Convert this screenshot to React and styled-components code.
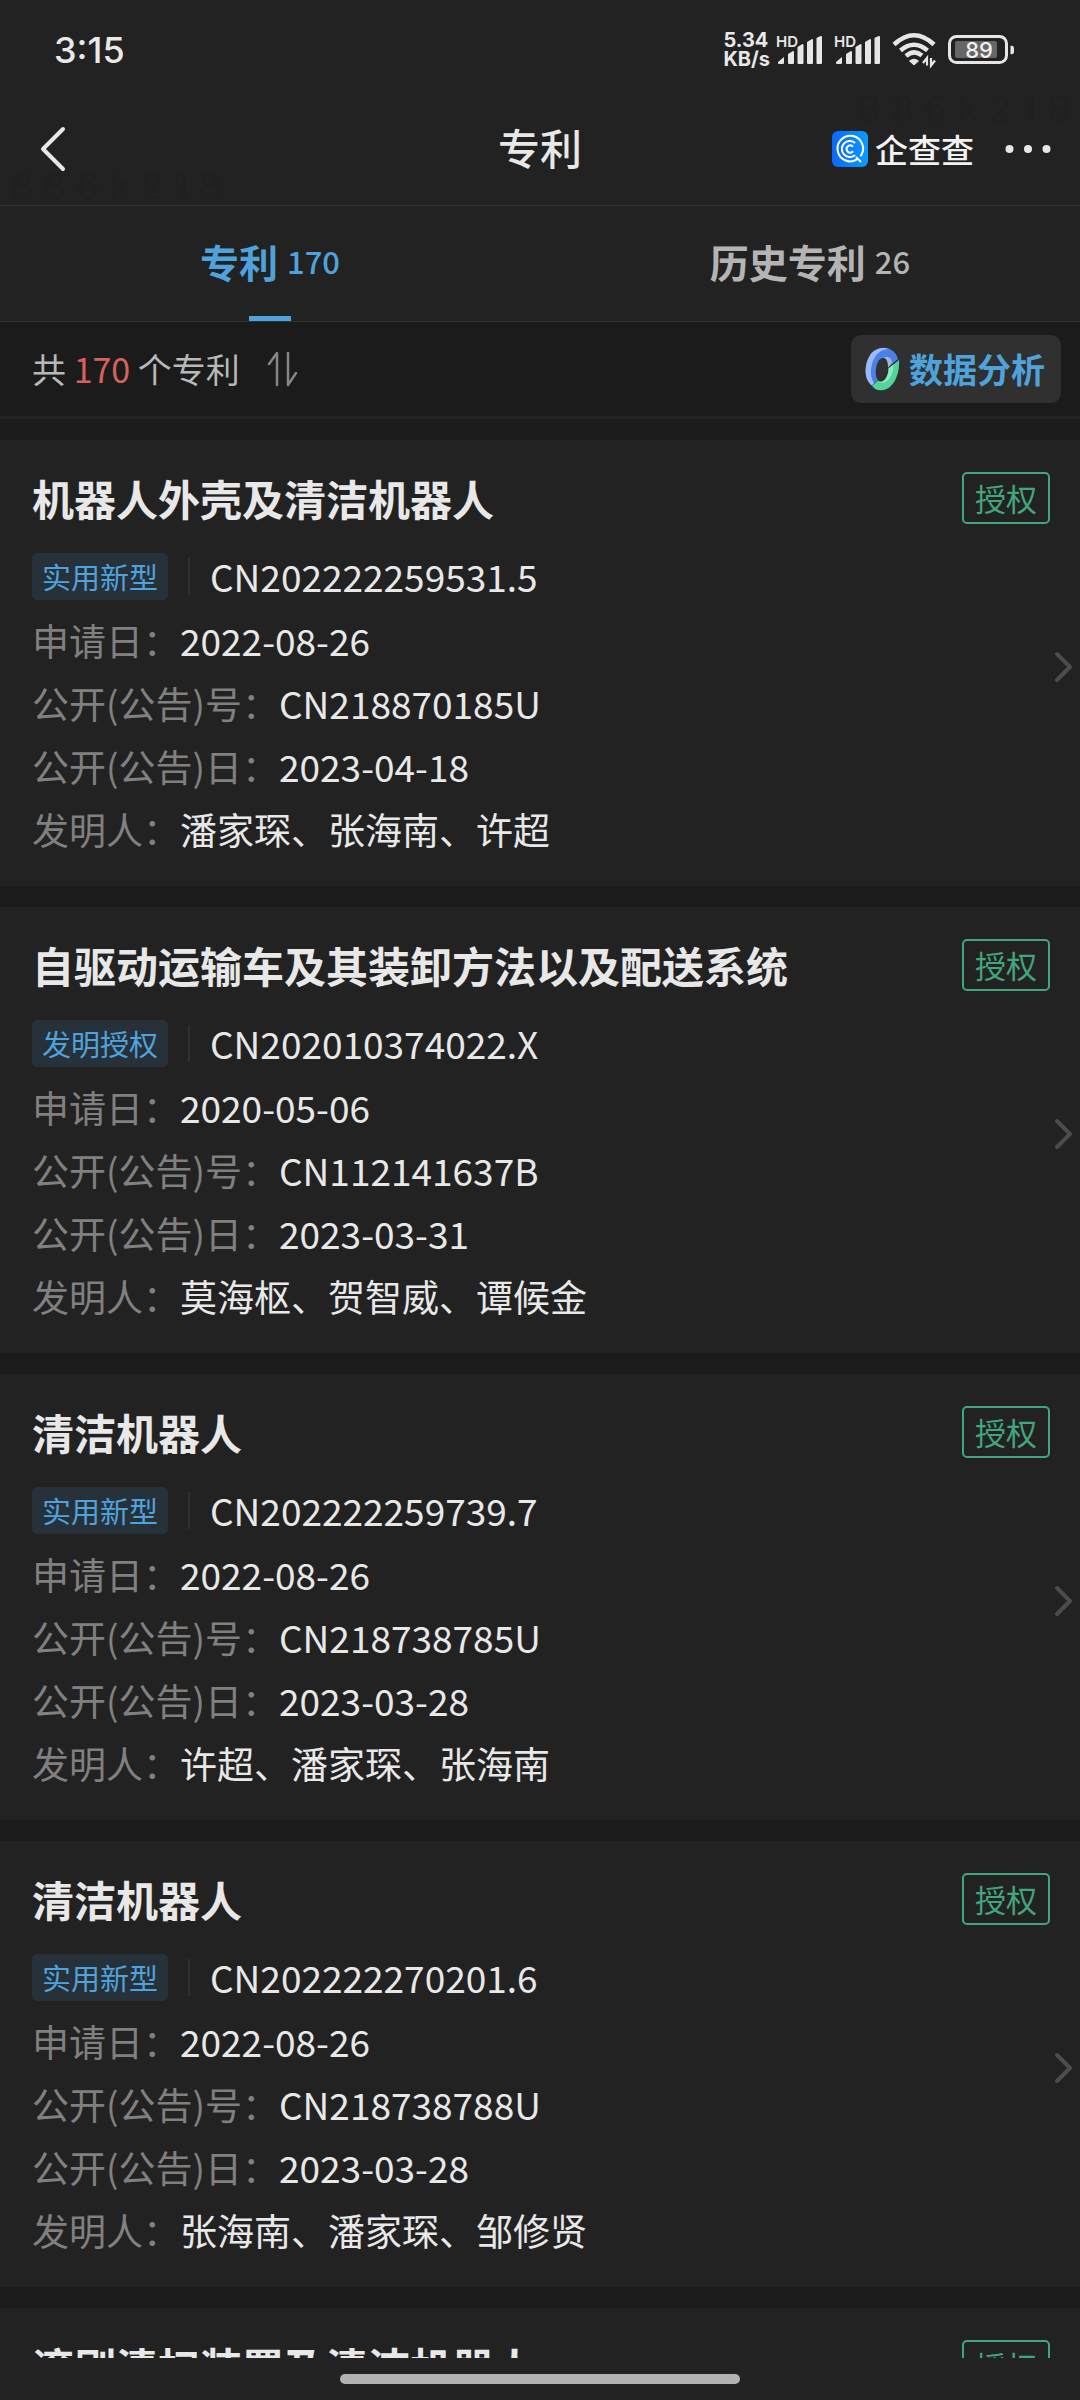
import React from "react";
import styled, { createGlobalStyle } from "styled-components";

const GlobalStyle = createGlobalStyle`
  * { box-sizing: border-box; }
  body {
    margin: 0;
    background: #1b1b1b;
    color: #e8e8e8;
    font-family: "Noto Sans CJK SC", "Noto Sans", sans-serif;
  }
  button {
    margin: 0;
    padding: 0;
    border: 0;
    background: none;
    color: inherit;
    font: inherit;
    cursor: pointer;
  }
  svg { display: block; flex: none; overflow: visible; }
`;

const Screen = styled.div`
  position: relative;
  display: flex;
  flex-direction: column;
  height: 100vh;
  overflow: hidden;
`;

const StatusBar = styled.div`
  display: flex;
  flex: none;
  align-items: center;
  height: 100px;
  padding: 0 65px 0 54px;
  background: #222;
`;

const Clock = styled.time`
  margin-right: auto;
  font: 500 36px/50px Inter, sans-serif;
`;

const NetSpeed = styled.div`
  display: flex;
  flex-direction: column;
  margin-right: 6px;
  font: 700 20px/19px Inter, sans-serif;
`;

const StatusIcons = styled.div`
  display: flex;
  align-items: center;
  gap: 12px;
`;

const Header = styled.header`
  display: grid;
  flex: none;
  grid-template-columns: 1fr auto 1fr;
  align-items: center;
  height: 106px;
  padding: 0 29px 8px;
  background: #222;
  border-bottom: 1px solid #333;
`;

const BackButton = styled.button`
  justify-self: start;
  padding-left: 11px;
`;

const PageTitle = styled.h1`
  margin: 0;
  padding-bottom: 4px;
  font-size: 42px;
  font-weight: 500;
  line-height: 62px;
`;

const HeaderTools = styled.div`
  display: flex;
  justify-self: end;
  align-items: center;
  gap: 31px;
`;

const Brand = styled.a`
  display: flex;
  align-items: center;
  gap: 7px;
  color: #f2f2f2;
  font-size: 33px;
  font-weight: 500;
  line-height: 36px;
  text-decoration: none;
`;

const Watermark = styled.span`
  position: absolute;
  top: ${(p) => p.$top}px;
  left: ${(p) => p.$left};
  color: #202020;
  font: 400 37px/30px Inter, sans-serif;
  pointer-events: none;
`;

const Tabs = styled.nav`
  display: grid;
  flex: none;
  grid-template-columns: 1fr 1fr;
  height: 116px;
  background: #222;
  border-bottom: 1px solid #333;
`;

const Tab = styled.button`
  position: relative;
  display: flex;
  align-items: center;
  justify-content: center;
  gap: 9px;
  padding-bottom: 5px;
  color: ${(p) => (p.$active ? "#4fa3dd" : "#b4b4b4")};
  font-size: 39px;
  font-weight: 700;
  line-height: 56px;

  &::after {
    content: "";
    position: absolute;
    bottom: 0;
    width: 42px;
    height: 5px;
    background: ${(p) => (p.$active ? "#4fa3dd" : "transparent")};
  }
`;

const TabCount = styled.span`
  font-size: 31px;
  font-weight: 500;
`;

const Summary = styled.div`
  display: flex;
  flex: none;
  align-items: center;
  justify-content: space-between;
  height: 97px;
  padding: 0 19px 0 32px;
  border-bottom: 3px solid #222;
`;

const SortGroup = styled.div`
  display: flex;
  align-items: center;
  gap: 27px;
  color: #b8b8b8;
  font-size: 34px;
  line-height: 50px;
`;

const Total = styled.span`
  color: #d9605e;
`;

const AnalysisButton = styled.button`
  display: flex;
  align-items: center;
  gap: 10px;
  height: 68px;
  padding: 0 16px 0 14px;
  border-radius: 10px;
  background: #303030;
  color: #4fa3dd;
  font-size: 34px;
  font-weight: 700;
  line-height: 50px;
`;

const List = styled.main`
  display: flex;
  flex: 1;
  flex-direction: column;
  gap: 21px;
  min-height: 0;
  padding-top: 21px;
  overflow-y: auto;
  scrollbar-width: none;
`;

const Card = styled.a`
  display: flex;
  flex: none;
  align-items: center;
  padding: 27px 8px 25px 32px;
  background: #222;
  color: inherit;
  text-decoration: none;
`;

const CardBody = styled.div`
  flex: 1;
  min-width: 0;
`;

const CardHead = styled.div`
  display: flex;
  align-items: center;
  justify-content: space-between;
  margin-bottom: 16px;
  padding-right: 5px;
`;

const CardTitle = styled.h2`
  margin: 0;
  font-size: 42px;
  font-weight: 700;
  line-height: 62px;
`;

const Status = styled.span`
  padding: 0 11px;
  border: 2px solid #41a67c;
  border-radius: 5px;
  color: #41a67c;
  font-size: 31px;
  line-height: 48px;
`;

const NumberRow = styled.div`
  display: flex;
  align-items: center;
  margin-bottom: 1px;
  font-size: 37px;
  line-height: 63px;
`;

const Kind = styled.span`
  margin-right: 20px;
  padding: 0 10px;
  border-radius: 5px;
  background: #27313a;
  color: #4fa3dd;
  font-size: 29px;
  line-height: 47px;
`;

const Number = styled.span`
  display: flex;
  align-items: center;

  &::before {
    content: "";
    width: 2px;
    height: 37px;
    margin-right: 20px;
    background: #303030;
  }
`;

const Fields = styled.dl`
  margin: 0;
  font-size: 37px;
  line-height: 63px;
`;

const Field = styled.div`
  display: flex;
`;

const Label = styled.dt`
  color: #808080;
`;

const Value = styled.dd`
  margin: 0;
`;

const Chevron = styled.svg`
  margin-top: 6px;
`;

const HomeArea = styled.footer`
  display: flex;
  flex: none;
  align-items: center;
  justify-content: center;
  height: 42px;
  background: #222;
`;

const HomePill = styled.div`
  width: 37%;
  height: 10px;
  border-radius: 5px;
  background: #b2b2b2;
`;

const PATENTS = [
  {
    title: "机器人外壳及清洁机器人",
    kind: "实用新型",
    number: "CN202222259531.5",
    applied: "2022-08-26",
    publication: "CN218870185U",
    published: "2023-04-18",
    inventors: "潘家琛、张海南、许超",
  },
  {
    title: "自驱动运输车及其装卸方法以及配送系统",
    kind: "发明授权",
    number: "CN202010374022.X",
    applied: "2020-05-06",
    publication: "CN112141637B",
    published: "2023-03-31",
    inventors: "莫海枢、贺智威、谭候金",
  },
  {
    title: "清洁机器人",
    kind: "实用新型",
    number: "CN202222259739.7",
    applied: "2022-08-26",
    publication: "CN218738785U",
    published: "2023-03-28",
    inventors: "许超、潘家琛、张海南",
  },
  {
    title: "清洁机器人",
    kind: "实用新型",
    number: "CN202222270201.6",
    applied: "2022-08-26",
    publication: "CN218738788U",
    published: "2023-03-28",
    inventors: "张海南、潘家琛、邹修贤",
  },
  { title: "滚刷清扫装置及清洁机器人" },
];

function Signal() {
  return (
    <svg width="46" height="32" viewBox="0 0 46 32" fill="#e6e6e6" aria-hidden="true">
      <text x="0" y="13" fontFamily="Inter, sans-serif" fontSize="15" fontWeight="600">HD</text>
      <path d="M2 28l6-5v6q0 1-1 1H3q-1 0-1-1zM12 20l5-3q1 0 1 1v11q0 1-1 1h-4q-1 0-1-1zM21.500 13l5-3q1 0 1 1v18q0 1-1 1h-4q-1 0-1-1zM31 8l5-3q1 0 1 1v23q0 1-1 1h-4q-1 0-1-1zM40.500 4l4-2q1.500-.5 1.500 1v26q0 1-1 1h-3.500q-1 0-1-1z" />
    </svg>
  );
}

function Wifi() {
  return (
    <svg width="44" height="34" viewBox="0 0 44 34" fill="none" stroke="#e6e6e6" aria-label="Wi-Fi">
      <path d="M2 11.500Q22-7 42 11.500M8.500 17.500Q22 6 35.500 17.500M14 23Q22 16 30 22.500" strokeWidth="4.500" />
      <path d="M17.500 28q4.500-3.500 9 0L22 32z" fill="#e6e6e6" strokeWidth="1" />
      <path d="M35 32.500V25l-4 5M39 25v7.500l4-5" strokeWidth="2.200" />
    </svg>
  );
}

function Battery() {
  return (
    <svg width="67" height="30" viewBox="0 0 67 30" aria-label="89%">
      <rect x="1.500" y="1.500" width="57" height="26" rx="7" fill="none" stroke="#e6e6e6" strokeWidth="3" />
      <rect x="7" y="6" width="42" height="17" rx="2" fill="#666" />
      <path d="M62.500 11q3.500-1 3.500 3v2q0 4-3.500 3z" fill="#e6e6e6" />
      <text x="31" y="22.500" textAnchor="middle" fill="#f0f0f0" fontFamily="Inter, sans-serif" fontSize="22" fontWeight="500">89</text>
    </svg>
  );
}

function BrandMark() {
  return (
    <svg width="36" height="36" viewBox="0 0 36 36" fill="none" stroke="#fff" strokeLinecap="round" aria-hidden="true">
      <defs>
        <linearGradient id="brand" x1="0" y1="0" x2="1" y2="0">
          <stop offset="0" stopColor="#0a68fb" />
          <stop offset="1" stopColor="#0a9cff" />
        </linearGradient>
      </defs>
      <rect width="36" height="36" rx="6" fill="url(#brand)" stroke="none" />
      <path d="M24.500 28.700A12.800 12.800 0 1 1 29 24.500M24.500 26.500l4 4" strokeWidth="2" />
      <path d="M22.500 24.500A8 8 0 1 1 22.500 11.500" strokeWidth="2" />
      <path d="M20.500 20.800A3.600 3.600 0 1 1 20.500 15.200" strokeWidth="2" />
    </svg>
  );
}

function SortIcon() {
  return (
    <svg width="31" height="36" viewBox="0 0 31 36" fill="none" stroke="#858585" strokeWidth="2.500" strokeLinecap="round" strokeLinejoin="round" aria-hidden="true">
      <path d="M10 34V2L2 13M21 2v32l8-12" />
    </svg>
  );
}

function RingIcon() {
  return (
    <svg width="34" height="44" viewBox="0 0 34 44" aria-hidden="true">
      <path d="M7 38.500C-2 32-1 15 7 5.500C16-3 30 0 33 12L23 20.500C23 8 14 8 11.500 19C10 26 11 31 13 33z" fill="#4b80e8" />
      <path d="M7 38.500C-2 32-1 15 7 5.500C11 1.500 18-.5 24 2C15 2 6 10 6 26C6 31 8 34 9 36.500z" fill="#9db9fa" />
      <path d="M19 10.500C23 9 27 11 27 16L23 20.500C23.500 15 22 11.500 19 10.500z" fill="#a9b4cc" />
      <path d="M34 13C35 28 28 42 18 43C13 44 10 42.500 7 39L13 33.500C18 38 24 29 23.500 21.500z" fill="#52d49a" />
      <path d="M28.500 17.500C29 28 22 38 15 35.500L13 33.500C18 38 24 29 23.500 21.500z" fill="#8cecc0" />
    </svg>
  );
}

function PatentCard({ patent }) {
  return (
    <Card href="#patent">
      <CardBody>
        <CardHead>
          <CardTitle>{patent.title}</CardTitle>
          <Status>授权</Status>
        </CardHead>
        {patent.number && (
          <>
            <NumberRow>
              <Kind>{patent.kind}</Kind>
              <Number>{patent.number}</Number>
            </NumberRow>
            <Fields>
              <Field><Label>申请日：</Label><Value>{patent.applied}</Value></Field>
              <Field><Label>公开(公告)号：</Label><Value>{patent.publication}</Value></Field>
              <Field><Label>公开(公告)日：</Label><Value>{patent.published}</Value></Field>
              <Field><Label>发明人：</Label><Value>{patent.inventors}</Value></Field>
            </Fields>
          </>
        )}
      </CardBody>
      <Chevron width="17" height="32" viewBox="0 0 17 32" fill="none" stroke="#4c4c4c" strokeWidth="4" strokeLinecap="round" strokeLinejoin="round" aria-hidden="true">
        <path d="M2 3l13 13L2 29" />
      </Chevron>
    </Card>
  );
}

export default function App() {
  return (
    <>
      <GlobalStyle />
      <Screen>
        <StatusBar>
          <Clock>3:15</Clock>
          <NetSpeed><span>5.34</span><span>KB/s</span></NetSpeed>
          <StatusIcons>
            <Signal />
            <Signal />
            <Wifi />
            <Battery />
          </StatusIcons>
        </StatusBar>
        <Header>
          <BackButton aria-label="返回">
            <svg width="27" height="46" viewBox="0 0 27 46" fill="none" stroke="#e8e8e8" strokeWidth="4" strokeLinecap="round" strokeLinejoin="round">
              <path d="M23 3L3 23l20 20" />
            </svg>
          </BackButton>
          <PageTitle>专利</PageTitle>
          <HeaderTools>
            <Brand href="#home"><BrandMark />企查查</Brand>
            <button aria-label="更多">
              <svg width="46" height="36" viewBox="0 0 46 36" fill="#e8e8e8">
                <circle cx="4.500" cy="18" r="4" />
                <circle cx="23" cy="18" r="4" />
                <circle cx="41.500" cy="18" r="4" />
              </svg>
            </button>
          </HeaderTools>
        </Header>
        <Watermark $top={171} $left="10px" aria-hidden="true">8 8 6 k 2 1 8</Watermark>
        <Watermark $top={94} $left="calc(100% - 222px)" aria-hidden="true">8 8 6 k 2 1 8</Watermark>
        <Tabs>
          <Tab $active aria-current="page">专利<TabCount>170</TabCount></Tab>
          <Tab>历史专利<TabCount>26</TabCount></Tab>
        </Tabs>
        <Summary>
          <SortGroup>
            <span>共 <Total>170</Total> 个专利</span>
            <button aria-label="排序"><SortIcon /></button>
          </SortGroup>
          <AnalysisButton><RingIcon />数据分析</AnalysisButton>
        </Summary>
        <List>
          {PATENTS.map((patent, i) => (
            <PatentCard key={i} patent={patent} />
          ))}
        </List>
        <HomeArea>
          <HomePill />
        </HomeArea>
      </Screen>
    </>
  );
}
